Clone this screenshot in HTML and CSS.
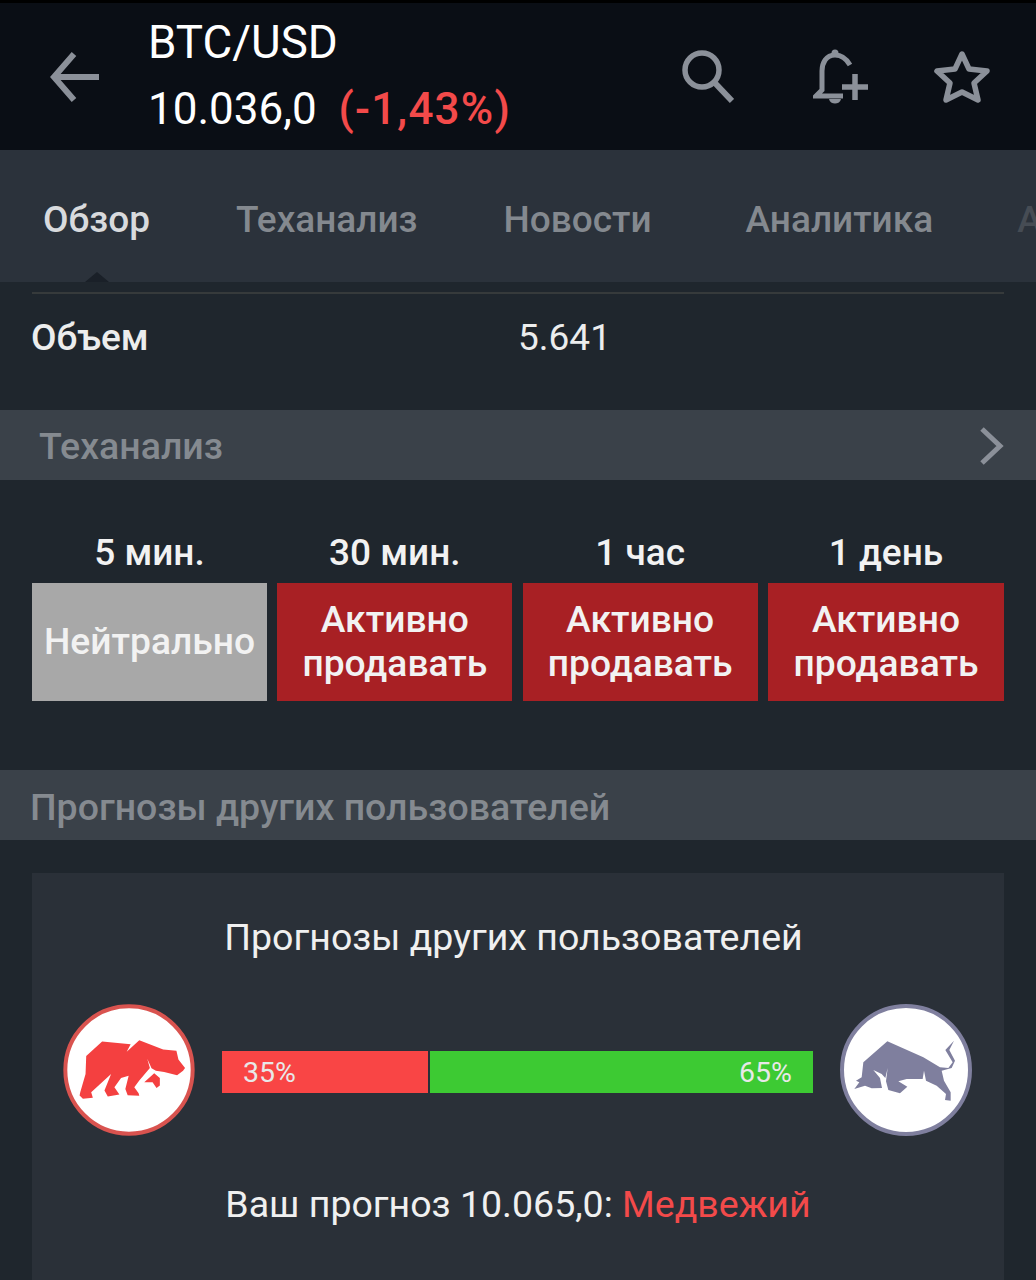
FILE: index.html
```html
<!DOCTYPE html>
<html>
<head>
    <title>BTC/USD</title>
    <link rel="stylesheet" href="styles.css">
</head>
<body>
    <div class="app">
        <header class="topbar">
            <svg class="back" width="52" height="52" viewBox="0 0 52 52">
                <path d="M26 3 L6 26 L26 49 M6 26 H51" fill="none" stroke="#8b9099" stroke-width="6"/>
            </svg>
            <div class="quote">
                <div class="pair">BTC/USD</div>
                <div class="price">10.036,0 <span class="change">(-1,43%)</span></div>
            </div>
            <div class="actions">
                <svg width="56" height="56" viewBox="0 0 56 56">
                    <circle cx="24" cy="21" r="17" fill="none" stroke="#8b9099" stroke-width="5.5"/>
                    <path d="M36 33 L54 52" stroke="#8b9099" stroke-width="6"/>
                </svg>
                <svg class="action-bell" width="58" height="58" viewBox="0 0 58 58">
                    <path d="M37 17 C33 10 28 7 22 7 C13 7 9 15 9 23 V42 L3 48 H30" fill="none" stroke="#8b9099" stroke-width="5"/>
                    <circle cx="22" cy="5" r="3.5" fill="#8b9099"/>
                    <path d="M16 51 H28 C27 57 17 57 16 51 Z" fill="#8b9099"/>
                    <path d="M29 39 H55 M42 26 V52" stroke="#8b9099" stroke-width="5.5"/>
                </svg>
                <svg width="58" height="56" viewBox="0 0 58 56">
                    <path d="M29 5 L36 20 L54 22 L41 34 L45 51 L29 43 L13 51 L17 34 L4 22 L22 20 Z" fill="none" stroke="#8b9099" stroke-width="5.5" stroke-linejoin="round"/>
                </svg>
            </div>
        </header>

        <nav class="tabs">
            <div class="tab tab-active">Обзор</div>
            <div class="tab">Теханализ</div>
            <div class="tab">Новости</div>
            <div class="tab tab-analytics">Аналитика</div>
            <div class="tab tab-next">А</div>
            <span class="tab-caret"></span>
        </nav>

        <main class="content">
            <div class="volume">
                <div class="volume-label">Объем</div>
                <div class="volume-value">5.641</div>
            </div>

            <div class="section section-ta">
                <span>Теханализ</span>
                <svg width="26" height="40" viewBox="0 0 26 40">
                    <path d="M4 3 L22 20 L4 37" fill="none" stroke="#8b9099" stroke-width="5"/>
                </svg>
            </div>

            <div class="signals">
                <div class="signal">
                    <div class="signal-time">5 мин.</div>
                    <div class="signal-box neutral">Нейтрально</div>
                </div>
                <div class="signal">
                    <div class="signal-time">30 мин.</div>
                    <div class="signal-box sell">Активно продавать</div>
                </div>
                <div class="signal">
                    <div class="signal-time">1 час</div>
                    <div class="signal-box sell">Активно продавать</div>
                </div>
                <div class="signal">
                    <div class="signal-time">1 день</div>
                    <div class="signal-box sell">Активно продавать</div>
                </div>
            </div>

            <div class="section section-users">Прогнозы других пользователей</div>

            <section class="card">
                <div class="card-title">Прогнозы других пользователей</div>
                <div class="sentiment">
                    <svg class="badge" width="132" height="132" viewBox="70 40 398 396">
                        <circle cx="269" cy="238" r="192" fill="#fff" stroke="#d9534f" stroke-width="12"/>
                        <path fill="#f44040" d="M122 305 L138 250 L140 196 L188 152 L274 160 L262 183 L300 148 L372 176 L412 180 L418 206 L438 232 L432 240 L414 254 L375 244 L350 240 L337 233 L324 204 L332 232 L300 270 L285 290 L298 308 L300 316 L265 314 L258 295 L268 255 L245 262 L225 290 L240 312 L205 318 L195 300 L215 250 L155 305 L160 322 L130 325 L120 315 Z"/>
                        <path fill="#f44040" d="M315 275 L345 248 L362 262 L362 285 L352 292 L340 275 Z"/>
                    </svg>
                    <div class="bar">
                        <div class="bar-part bar-bear" style="width: 35%">35%</div>
                        <div class="bar-part bar-bull" style="width: 65%">65%</div>
                    </div>
                    <svg class="badge" width="132" height="132" viewBox="60 40 396 396">
                        <circle cx="258" cy="238" r="192" fill="#fff" stroke="#7f7f9e" stroke-width="12"/>
                        <path fill="#7f7f9e" d="M202 152 L310 200 L360 230 L385 232 L398 215 L376 178 L402 150 L388 178 L405 210 L395 232 L365 240 L372 270 L392 305 L392 330 L375 328 L378 310 L350 285 L318 270 L312 240 L308 265 L260 265 L235 272 L262 288 L240 308 L205 298 L198 272 L203 232 L196 262 L185 250 L160 238 L180 262 L186 292 L155 293 L135 285 L103 295 L118 275 L108 270 L125 260 L130 215 Z"/>
                    </svg>
                </div>
                <div class="forecast">Ваш прогноз 10.065,0: <span class="bear-text">Медвежий</span></div>
            </section>
        </main>
    </div>
</body>
</html>
```
FILE: styles.css
```css
* {
    box-sizing: border-box;
}
body {
    margin: 0;
    background-color: #1f262d;
    font-family: Roboto, "Noto Sans", sans-serif;
}
.app {
    width: 1036px;
    height: 1280px;
    overflow: hidden;
}
.topbar {
    height: 150px;
    display: flex;
    align-items: center;
    padding: 0 45px 0 48px;
    background-color: #0a0e15;
    border-top: 3px solid #000;
}
.back {
    margin-top: 1px;
}
.quote {
    margin-left: 48px;
    margin-top: -1px;
    color: #fff;
    font-size: 44px;
}
.pair {
    font-size: 45.7px;
    line-height: 65px;
}
.price {
    line-height: 68px;
}
.change {
    margin-left: 11px;
    font-weight: 500;
    letter-spacing: 1.2px;
    color: #f34a4a;
}
.actions {
    margin-left: auto;
    display: flex;
    align-items: center;
}
.action-bell {
    margin: 0 62px 0 79px;
}
.tabs {
    position: relative;
    height: 132px;
    display: flex;
    align-items: center;
    gap: 86px;
    padding: 6px 0 0 43px;
    overflow: hidden;
    background-color: #2b323b;
    font-size: 37px;
    font-weight: 500;
    color: #84898f;
    white-space: nowrap;
}
.tab-active {
    color: #d8dadd;
}
.tab-analytics {
    margin-left: 8px;
}
.tab-next {
    margin-left: -2px;
    opacity: 0.3;
}
.tab-caret {
    position: absolute;
    left: 85px;
    bottom: 0;
    border-left: 12px solid transparent;
    border-right: 12px solid transparent;
    border-bottom: 10px solid #1a2028;
}
.content {
    padding-top: 10px;
}
.volume {
    height: 118px;
    margin: 0 32px;
    display: flex;
    align-items: center;
    border-top: 2px solid #363a3b;
    padding-bottom: 29px;
    color: #eceded;
    font-size: 37px;
}
.volume-label {
    width: 487px;
    margin-left: -1px;
    font-weight: 500;
}
.section {
    height: 70px;
    display: flex;
    align-items: center;
    background-color: #3a4149;
    color: #858a90;
    font-size: 37.5px;
    font-weight: 500;
}
.section-ta {
    justify-content: space-between;
    padding: 1px 32px 0 39px;
}
.section-users {
    padding-left: 30px;
    padding-top: 4px;
}
.signals {
    height: 290px;
    padding: 49px 32px 0;
    display: grid;
    grid-template-columns: repeat(3, 235px) 236px;
    column-gap: 10.33px;
    align-content: start;
}
.signal-time {
    height: 54px;
    text-align: center;
    color: #f2f2f2;
    font-size: 37px;
    font-weight: 500;
    line-height: 48px;
}
.signal-box {
    height: 118px;
    display: flex;
    align-items: center;
    justify-content: center;
    text-align: center;
    color: #f2f2f2;
    font-size: 37.2px;
    font-weight: 500;
    line-height: 44px;
    padding: 0 8px 2px;
}
.neutral {
    background-color: #a8a8a8;
}
.sell {
    background-color: #a82024;
}
.card {
    margin: 33px 32px 0;
    height: 420px;
    padding-top: 40px;
    background-color: #2a3038;
    color: #f0f0f0;
    font-size: 37.5px;
}
.card-title {
    text-align: center;
    line-height: 48px;
    padding-right: 9px;
}
.sentiment {
    margin-top: 43px;
    padding: 0 32px 0 31px;
    display: flex;
    align-items: center;
    justify-content: space-between;
}
.bar {
    width: 591px;
    height: 42px;
    margin-top: 4px;
    display: flex;
    gap: 2px;
    color: #e8e8e8;
    font-size: 28.5px;
}
.bar-part {
    display: flex;
    align-items: center;
    padding: 0 21px;
}
.bar-bear {
    background-color: #f94545;
}
.bar-bull {
    justify-content: flex-end;
    background-color: #3dca33;
}
.forecast {
    margin-top: 44px;
    text-align: center;
    line-height: 48px;
}
.bear-text {
    color: #f34a4a;
}
```
